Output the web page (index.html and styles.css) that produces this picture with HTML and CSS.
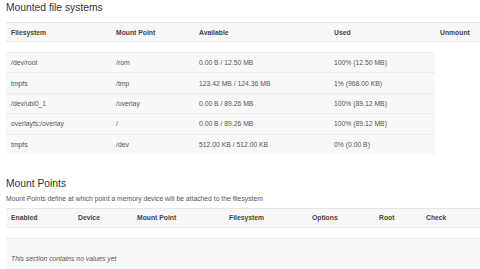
FILE: index.html
```html
<!DOCTYPE html>
<html lang="en">
<head>
  <meta charset="UTF-8" />
  <title>Mount Points</title>
  <link rel="stylesheet" href="styles.css">
</head>
<body>

  <section class="cbi-section">
    <h2>Mounted file systems</h2>
    <div class="table fs-table">
      <div class="tr table-titles">
        <div class="th">Filesystem</div>
        <div class="th">Mount Point</div>
        <div class="th">Available</div>
        <div class="th">Used</div>
        <div class="th">Unmount</div>
      </div>
      <div class="rows">
        <div class="tr">
          <div class="td">/dev/root</div>
          <div class="td">/rom</div>
          <div class="td">0.00 B / 12.50 MB</div>
          <div class="td">100% (12.50 MB)</div>
        </div>
        <div class="tr">
          <div class="td">tmpfs</div>
          <div class="td">/tmp</div>
          <div class="td">123.42 MB / 124.36 MB</div>
          <div class="td">1% (968.00 KB)</div>
        </div>
        <div class="tr">
          <div class="td">/dev/ubi0_1</div>
          <div class="td">/overlay</div>
          <div class="td">0.00 B / 89.26 MB</div>
          <div class="td">100% (89.12 MB)</div>
        </div>
        <div class="tr">
          <div class="td">overlayfs:/overlay</div>
          <div class="td">/</div>
          <div class="td">0.00 B / 89.26 MB</div>
          <div class="td">100% (89.12 MB)</div>
        </div>
        <div class="tr">
          <div class="td">tmpfs</div>
          <div class="td">/dev</div>
          <div class="td">512.00 KB / 512.00 KB</div>
          <div class="td">0% (0.00 B)</div>
        </div>
      </div>
    </div>
  </section>

  <section class="cbi-section mounts">
    <h2>Mount Points</h2>
    <p class="descr">Mount Points define at which point a memory device will be attached to the filesystem</p>
    <div class="table mount-table">
      <div class="tr table-titles">
        <div class="th">Enabled</div>
        <div class="th">Device</div>
        <div class="th">Mount Point</div>
        <div class="th">Filesystem</div>
        <div class="th">Options</div>
        <div class="th">Root</div>
        <div class="th">Check</div>
      </div>
      <div class="placeholder">
        <em>This section contains no values yet</em>
      </div>
    </div>
  </section>

</body>
</html>
```

FILE: styles.css
```css
* {
  box-sizing: border-box;
  margin: 0;
  padding: 0;
}

body {
  font-family: 'Liberation Sans', Arial, sans-serif;
  font-size: 6.8px;
  color: #555;
  background: #fff;
  padding-left: 6px;
  overflow: hidden;
}

h2 {
  font-size: 10.3px;
  line-height: 12px;
  font-weight: normal;
  color: #333;
  margin-top: 2px;
}

.tr {
  display: grid;
  align-items: center;
  height: 20.4px;
}

.table-titles {
  height: 20px;
  margin-top: 8px;
  background: #f7f7f7;
  border-top: 1px solid #e6e6e6;
  border-bottom: 1px solid #ececec;
}

.th {
  font-weight: bold;
  color: #444;
  padding-left: 5px;
  white-space: nowrap;
}

.td {
  padding-left: 5px;
  white-space: nowrap;
}

.fs-table .tr {
  grid-template-columns: 105px 83px 135px 106px 1fr;
}

.rows {
  width: 429px;
  margin-top: 10px;
}

.rows .tr {
  background: #f8f8f8;
  border-top: 1px solid #ececec;
}

.mounts h2 {
  margin-top: 24px;
}

.descr {
  line-height: 9px;
  margin-top: 4px;
  color: #555;
}

.mount-table .table-titles {
  margin-top: 5px;
  grid-template-columns: 67px 59px 92px 83px 67px 47px 59px 1fr;
}

.placeholder {
  margin-top: 10px;
  height: 40px;
  background: #f8f8f8;
  border-top: 1px solid #ececec;
  padding: 15px 5px 0;
  line-height: 9px;
  color: #555;
}
```
